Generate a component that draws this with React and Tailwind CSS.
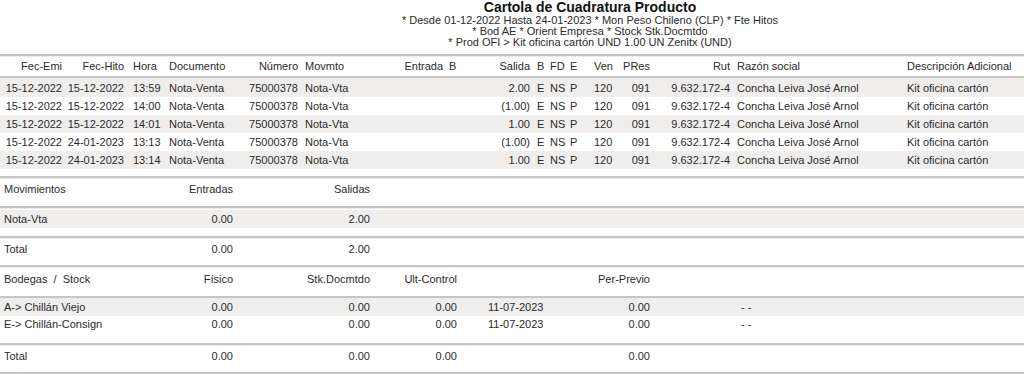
import React from "react";

const mainCols = [
  "w-[63px] shrink-0 text-right pr-[1px]",
  "w-[62px] shrink-0 text-right pr-[1px]",
  "w-[40px] shrink-0 pl-[8px]",
  "w-[70px] shrink-0 pl-[4px]",
  "w-[64px] shrink-0 text-right pr-[1px]",
  "w-[81px] shrink-0 pl-[6px]",
  "w-[64px] shrink-0 text-right pr-[1px]",
  "w-[26px] shrink-0 pl-[5px]",
  "w-[61px] shrink-0 text-right pr-[1px]",
  "w-[16px] shrink-0 pl-[6px]",
  "w-[19px] shrink-0 pl-[3px]",
  "w-[24px] shrink-0 pl-[4px]",
  "w-[30px] shrink-0 pl-[4px]",
  "w-[31px] shrink-0 text-right pr-[1px]",
  "w-[80px] shrink-0 text-right pr-[1px]",
  "w-[169px] shrink-0 pl-[6px]",
  "flex-1 pl-[7px]",
];

const mainHeader = [
  "Fec-Emi", "Fec-Hito", "Hora", "Documento", "Número", "Movmto", "Entrada", "B",
  "Salida", "B", "FD", "E", "Ven", "PRes", "Rut", "Razón social", "Descripción Adicional",
];

const rows = [
  ["15-12-2022", "15-12-2022", "13:59", "2.00"],
  ["15-12-2022", "15-12-2022", "14:00", "(1.00)"],
  ["15-12-2022", "15-12-2022", "14:01", "1.00"],
  ["15-12-2022", "24-01-2023", "13:13", "(1.00)"],
  ["15-12-2022", "24-01-2023", "13:14", "1.00"],
];

const bodCols = [
  "w-[180px] shrink-0 pl-[4px]",
  "w-[54px] shrink-0 text-right pr-[1px]",
  "w-[137px] shrink-0 text-right pr-[1px]",
  "w-[87px] shrink-0 text-right pr-[1px]",
  "w-[102px] shrink-0 pl-[30px]",
  "w-[91px] shrink-0 text-right pr-[1px]",
  "flex-1 pl-[90px]",
];

function Line() {
  return <div className="h-[3px] border-t-2 border-[#c6c6c6] border-b border-b-[#ececec]" />;
}

function Cells({ cols, values }) {
  return values.map((v, i) => (
    <div key={i} className={cols[i] + " whitespace-pre"}>
      {v}
    </div>
  ));
}

export default function App() {
  return (
    <div
      className="w-[1024px] h-[374px] bg-white text-[#2b2b2b] text-[11px] leading-[13px] overflow-hidden"
      style={{ fontFamily: '"Liberation Sans", Arial, sans-serif' }}
    >
      {/* Title block */}
      <div className="h-[54px] pl-[156px] text-center">
        <div className="text-[14px] leading-[15px] font-bold text-[#111]">
          Cartola de Cuadratura Producto
        </div>
        <div className="text-[11px] leading-[11px]">
          * Desde 01-12-2022 Hasta 24-01-2023 * Mon Peso Chileno (CLP) * Fte Hitos
        </div>
        <div className="text-[11px] leading-[11px]">
          * Bod AE * Orient Empresa * Stock Stk.Docmtdo
        </div>
        <div className="text-[11px] leading-[11px]">
          * Prod OFI &gt; Kit oficina cartón UND 1.00 UN Zenitx (UND)
        </div>
      </div>

      <Line />
      <div className="flex items-center h-[19px]">
        <Cells cols={mainCols} values={mainHeader} />
      </div>
      <Line />

      <div className="flex flex-col">
        {rows.map((r, i) => (
          <div
            key={i}
            className={
              "flex items-center h-[18px] " + (i % 2 === 0 ? "bg-[#efeeed]" : "bg-white")
            }
          >
            <Cells
              cols={mainCols}
              values={[
                r[0], r[1], r[2], "Nota-Venta", "75000378", "Nota-Vta", "", "",
                r[3], "E", "NS", "P", "120", "091", "9.632.172-4",
                "Concha Leiva José Arnol", "Kit oficina cartón",
              ]}
            />
          </div>
        ))}
      </div>
      <div className="h-[7px]" />

      {/* Movimientos */}
      <Line />
      <div className="flex h-[27px] pt-[4px]">
        <Cells cols={bodCols} values={["Movimientos", "Entradas", "Salidas"]} />
      </div>
      <Line />
      <div className="h-[1px]" />
      <div className="flex items-center h-[18px] bg-[#efeeed]">
        <Cells cols={bodCols} values={["Nota-Vta", "0.00", "2.00"]} />
      </div>
      <div className="h-[8px]" />
      <Line />
      <div className="flex h-[26px] pt-[4px]">
        <Cells cols={bodCols} values={["Total", "0.00", "2.00"]} />
      </div>
      <Line />

      {/* Bodegas */}
      <div className="flex h-[28px] pt-[5px]">
        <Cells
          cols={bodCols}
          values={["Bodegas  /  Stock", "Físico", "Stk.Docmtdo", "Ult-Control", "", "Per-Previo"]}
        />
      </div>
      <Line />
      <div className="flex items-center h-[17px] bg-[#efeeed]">
        <Cells
          cols={bodCols}
          values={["A-> Chillán Viejo", "0.00", "0.00", "0.00", "11-07-2023", "0.00", "- -"]}
        />
      </div>
      <div className="flex items-center h-[17px]">
        <Cells
          cols={bodCols}
          values={["E-> Chillán-Consign", "0.00", "0.00", "0.00", "11-07-2023", "0.00", "- -"]}
        />
      </div>
      <div className="h-[10px]" />
      <Line />
      <div className="flex h-[26px] pt-[4px]">
        <Cells cols={bodCols} values={["Total", "0.00", "0.00", "0.00", "", "0.00"]} />
      </div>
      <Line />
    </div>
  );
}
